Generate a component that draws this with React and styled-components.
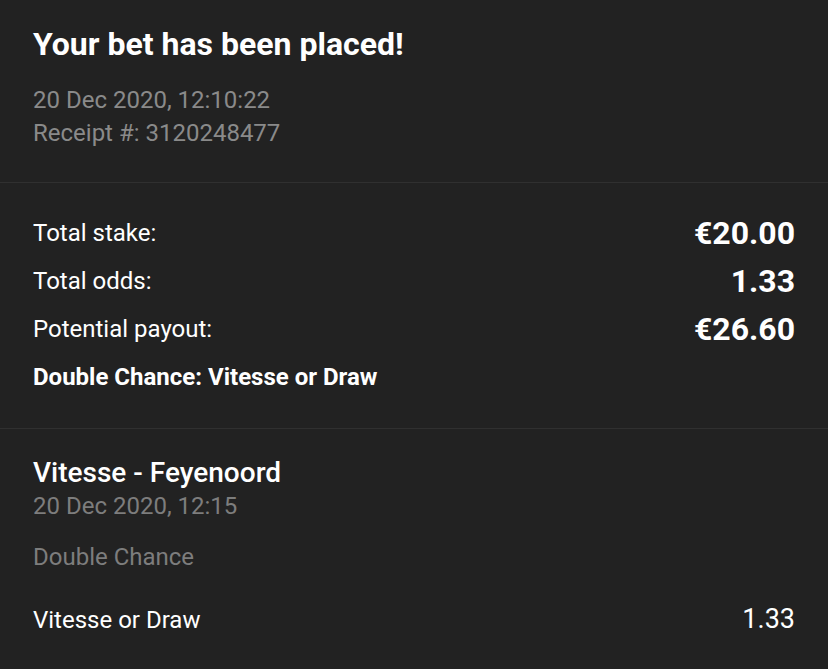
import React from "react";
import styled, { createGlobalStyle } from "styled-components";

const Global = createGlobalStyle`
  html, body { margin: 0; padding: 0; background: #222222; }
  body { font-family: Roboto, "Noto Sans", Arial, sans-serif; -webkit-font-smoothing: antialiased; }
`;

const Page = styled.div`
  width: 828px;
  min-height: 669px;
  background: #222222;
  color: #ffffff;
`;

const Section = styled.section`
  padding: ${(p) => p.$pad};
  border-bottom: ${(p) => (p.$divider ? "1px solid #303030" : "none")};
`;

const Title = styled.h1`
  margin: 0;
  font-size: 32px;
  line-height: 38px;
  font-weight: 700;
  color: #ffffff;
`;

const Meta = styled.div`
  font-size: 24px;
  line-height: 33px;
  font-weight: 400;
  color: ${(p) => p.$color || "#8a8a8a"};
  margin-top: ${(p) => p.$mt || 0}px;
`;

const Row = styled.div`
  display: flex;
  align-items: center;
  justify-content: space-between;
  min-height: 48px;
`;

const Label = styled.span`
  font-size: 24px;
  line-height: 1.2;
  font-weight: 400;
  color: #ffffff;
`;

const Value = styled.span`
  font-size: 32px;
  line-height: 1.2;
  font-weight: 700;
  color: #ffffff;
`;

const Selection = styled.span`
  font-size: 24px;
  line-height: 1.2;
  font-weight: 700;
  color: #ffffff;
`;

const EventName = styled.h2`
  margin: 0;
  font-size: 28px;
  line-height: 1.2;
  font-weight: 500;
  color: #ffffff;
`;

const PickRow = styled.div`
  display: flex;
  justify-content: space-between;
  align-items: baseline;
  font-size: 24px;
  line-height: 33px;
  color: #ffffff;
  margin-top: 29px;
`;

const Odds = styled.span`
  font-size: 27px;
`;

export default function App() {
  return (
    <Page>
      <Global />
      <Section $pad="25px 33px 32px" $divider>
        <Title>Your bet has been placed!</Title>
        <Meta $mt={21}>20 Dec 2020, 12:10:22</Meta>
        <Meta>Receipt #: 3120248477</Meta>
      </Section>
      <Section $pad="26px 33px 27px" $divider>
        <Row>
          <Label>Total stake:</Label>
          <Value>€20.00</Value>
        </Row>
        <Row>
          <Label>Total odds:</Label>
          <Value>1.33</Value>
        </Row>
        <Row>
          <Label>Potential payout:</Label>
          <Value>€26.60</Value>
        </Row>
        <Row>
          <Selection>Double Chance: Vitesse or Draw</Selection>
        </Row>
      </Section>
      <Section $pad="27px 33px 30px">
        <EventName>Vitesse - Feyenoord</EventName>
        <Meta $color="#7d7d7d">20 Dec 2020, 12:15</Meta>
        <Meta $color="#7d7d7d" $mt={18}>Double Chance</Meta>
        <PickRow>
          <span>Vitesse or Draw</span>
          <Odds>1.33</Odds>
        </PickRow>
      </Section>
    </Page>
  );
}
